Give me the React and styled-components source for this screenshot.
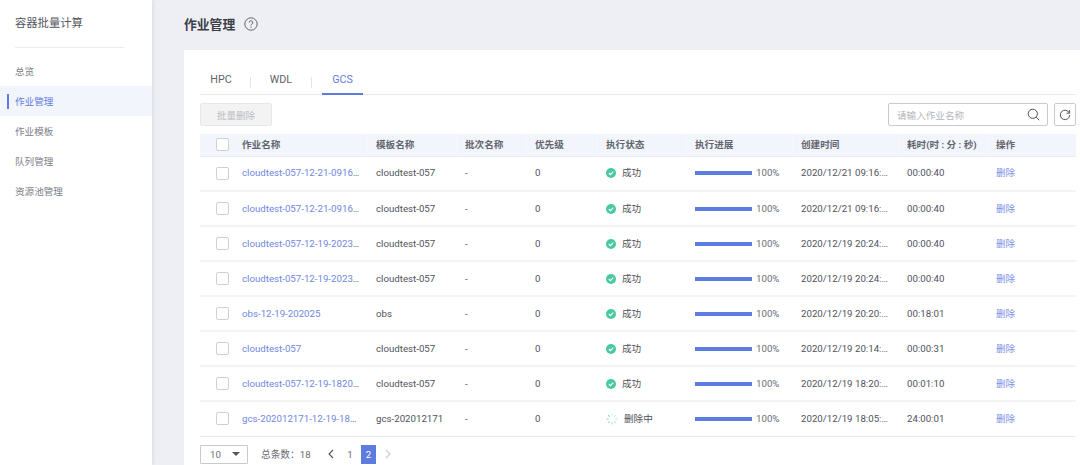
import { createGlobalStyle } from "styled-components";
import styled from "styled-components";

const GlobalStyle = createGlobalStyle`
  html, body {
    margin: 0;
    height: 100%;
    overflow: hidden;
    background: #eeeff5;
  }
  body {
    font-family: Roboto, "Noto Sans CJK SC", sans-serif;
    font-size: 9.7px;
    color: #4a4d57;
  }
  #root {
    height: 100%;
  }
`;

const Page = styled.div`
  display: flex;
  width: 1080px;
  height: 465px;
  overflow: hidden;
`;

const Sidebar = styled.aside`
  flex: 0 0 152px;
  background: #fff;
  box-shadow: 1px 0 4px rgba(60, 70, 110, 0.12);
`;

const SideTitle = styled.div`
  margin: 0 28px 0 15px;
  padding: 17px 0 16px;
  height: 14px;
  line-height: 14px;
  font-size: 11.3px;
  color: #555861;
  border-bottom: 1px solid #ececf0;
`;

const SideNav = styled.nav`
  margin-top: 8px;
`;

const SideItem = styled.div`
  position: relative;
  height: 30px;
  line-height: 32px;
  padding-left: 15px;
  font-size: 9.6px;
  color: ${p => (p.$active ? "#5e7ce0" : "#7b7e87")};
  background: ${p => (p.$active ? "#f2f5fc" : "transparent")};

  &::before {
    content: "";
    display: ${p => (p.$active ? "block" : "none")};
    position: absolute;
    left: 7px;
    top: 8px;
    width: 2px;
    height: 15px;
    background: #5e7ce0;
  }
`;

const Main = styled.main`
  flex: 1;
  padding-left: 32px;
  min-width: 0;
`;

const PageHeader = styled.header`
  display: flex;
  align-items: center;
  gap: 9px;
  box-sizing: border-box;
  height: 50px;
  padding-bottom: 2px;
`;

const PageTitle = styled.h1`
  margin: 0 0 2px;
  font-size: 12.8px;
  font-weight: 700;
  color: #3c3f48;
`;

const HelpIcon = styled.svg`
  width: 14px;
  height: 14px;
`;

const Card = styled.section`
  background: #fff;
  height: 415px;
  padding: 16px 4px 0 16px;
  box-sizing: border-box;
`;

const Tabs = styled.div`
  display: flex;
  align-items: flex-end;
  height: 28px;
  border-bottom: 1px solid #e8e9ee;
`;

const Tab = styled.div`
  position: relative;
  box-sizing: border-box;
  width: ${p => p.$w}px;
  height: 28px;
  line-height: 25px;
  margin-bottom: -1px;
  text-align: center;
  font-size: 10.7px;
  color: ${p => (p.$active ? "#5e7ce0" : "#5f626b")};
  border-bottom: 2px solid ${p => (p.$active ? "#5e7ce0" : "transparent")};
`;

const TabGap = styled.span`
  flex: 0 0 1px;
  height: 11px;
  margin: 0 ${p => p.$r}px 6px ${p => p.$l}px;
  background: #e3e4e8;
`;

const Toolbar = styled.div`
  display: flex;
  align-items: center;
  justify-content: space-between;
  height: 39px;
  padding-right: 0;
`;

const BatchButton = styled.button`
  width: 72px;
  height: 23px;
  padding: 0;
  font: inherit;
  font-size: 9.6px;
  color: #bcbdc2;
  background: #f3f3f4;
  border: 1px solid #e8e8ea;
  border-radius: 2px;
`;

const ToolRight = styled.div`
  display: flex;
  gap: 6px;
`;

const Search = styled.div`
  display: flex;
  align-items: center;
  justify-content: space-between;
  box-sizing: border-box;
  width: 160px;
  height: 23px;
  padding: 0 7px 0 8px;
  border: 1px solid #c9cad0;
  border-radius: 2px;
  font-size: 9.6px;
  color: #b4b6bd;
`;

const RefreshButton = styled.div`
  display: flex;
  align-items: center;
  justify-content: center;
  box-sizing: border-box;
  width: 22px;
  height: 23px;
  border: 1px solid #c9cad0;
  border-radius: 2px;
`;

const Table = styled.table`
  width: 876px;
  table-layout: fixed;
  border-collapse: collapse;
`;

const Th = styled.th`
  position: relative;
  height: 22px;
  padding: 0 9px;
  text-align: left;
  font-size: 9.6px;
  font-weight: 700;
  line-height: 12px;
  color: #62656e;
  background: #f2f5fc;
  border-bottom: 1px solid #e8ebf3;
  box-sizing: border-box;

  &:not(:first-child):not(:nth-child(2))::before {
    content: "";
    position: absolute;
    left: 0;
    top: 0;
    bottom: 0;
    width: 1px;
    background: #f7f8fd;
  }
`;

const Row = styled.tr`
  & > td {
    border-bottom: ${p => (p.$last ? "1px solid #e8e8ec" : "2px solid #f4f4f6")};
  }
`;

const Td = styled.td`
  height: 35px;
  padding: 0 9px;
  box-sizing: border-box;
  line-height: 12px;
  color: #4f525b;
  white-space: nowrap;
  overflow: hidden;
  text-overflow: ellipsis;
`;

const CheckCell = styled(Td)`
  padding: 0 0 0 16px;
`;

const CheckHead = styled(Th)`
  padding: 0 0 0 16px;
`;

const NameCell = styled(Td)`
  padding-right: 6px;
`;

const Checkbox = styled.span`
  display: block;
  box-sizing: border-box;
  width: 13px;
  height: 13px;
  background: #fff;
  border: 1px solid #cfd0d5;
  border-radius: 2px;
`;

const NameLink = styled.a`
  color: #6f87e2;
`;

const Status = styled.div`
  display: flex;
  align-items: center;
  gap: ${p => p.$gap}px;
  height: 12px;
  font-size: 9.6px;
`;

const Progress = styled.div`
  display: flex;
  align-items: center;
  gap: 4px;
  color: #6a6d76;
`;

const Track = styled.div`
  width: 57px;
  height: 4px;
  background: #5e7ce0;
`;

const DeleteLink = styled.a`
  font-size: 9.6px;
  color: #7d93e6;
`;

const Pager = styled.footer`
  display: flex;
  align-items: center;
  height: 19px;
  margin-top: 8px;
  color: #6a6d76;
`;

const PageSize = styled.div`
  display: flex;
  align-items: center;
  justify-content: space-between;
  box-sizing: border-box;
  width: 48px;
  height: 19px;
  padding: 0 7px 0 9px;
  border: 1px solid #c9cad0;
  border-radius: 1px;
`;

const Caret = styled.span`
  width: 0;
  height: 0;
  border-left: 4px solid transparent;
  border-right: 4px solid transparent;
  border-top: 4px solid #555861;
`;

const Total = styled.span`
  width: 50px;
  margin: 0 12px 0 13px;
  white-space: nowrap;
`;

const PageButton = styled.span`
  display: flex;
  align-items: center;
  justify-content: center;
  width: ${p => p.$w || 16}px;
  height: 19px;
  margin-right: ${p => p.$mr || 0}px;
  color: ${p => (p.$active ? "#fff" : "#6a6d76")};
  background: ${p => (p.$active ? "#5e7ce0" : "transparent")};
`;

const Chevron = styled.svg`
  width: 8px;
  height: 10px;
`;

const columns = [33, 134, 89, 70, 71, 89, 106, 106, 89, 89];
const headers = ["作业名称", "模板名称", "批次名称", "优先级", "执行状态", "执行进展", "创建时间", "耗时(时 : 分 : 秒)", "操作"];

const jobs = [
  { name: "cloudtest-057-12-21-091625", template: "cloudtest-057", created: "2020/12/21 09:16:32", cost: "00:00:40" },
  { name: "cloudtest-057-12-21-091612", template: "cloudtest-057", created: "2020/12/21 09:16:20", cost: "00:00:40" },
  { name: "cloudtest-057-12-19-202341", template: "cloudtest-057", created: "2020/12/19 20:24:02", cost: "00:00:40" },
  { name: "cloudtest-057-12-19-202328", template: "cloudtest-057", created: "2020/12/19 20:24:01", cost: "00:00:40" },
  { name: "obs-12-19-202025", template: "obs", created: "2020/12/19 20:20:25", cost: "00:18:01" },
  { name: "cloudtest-057", template: "cloudtest-057", created: "2020/12/19 20:14:10", cost: "00:00:31" },
  { name: "cloudtest-057-12-19-182015", template: "cloudtest-057", created: "2020/12/19 18:20:15", cost: "00:01:10" },
  { name: "gcs-202012171-12-19-180532", template: "gcs-202012171", created: "2020/12/19 18:05:32", cost: "24:00:01", deleting: true },
];

function SuccessIcon() {
  return (
    <svg width="10" height="10" viewBox="0 0 10 10">
      <circle cx="5" cy="5" r="5" fill="#48c9a0" />
      <path d="M2.8 5l1.6 1.6 2.9-2.9" fill="none" stroke="#fff" strokeWidth="1.1" />
    </svg>
  );
}

function SpinnerIcon() {
  const ticks = [0, 45, 90, 135, 180, 225, 270, 315];
  return (
    <svg width="12" height="12" viewBox="0 0 12 12">
      {ticks.map((deg, i) => (
        <line
          key={deg}
          x1="6"
          y1="0.6"
          x2="6"
          y2="2.8"
          stroke="#48c9a0"
          strokeOpacity={0.25 + i * 0.08}
          strokeWidth="1"
          transform={`rotate(${deg} 6 6)`}
        />
      ))}
    </svg>
  );
}

export default function App() {
  return (
    <Page>
      <GlobalStyle />
      <Sidebar>
        <SideTitle>容器批量计算</SideTitle>
        <SideNav>
          <SideItem>总览</SideItem>
          <SideItem $active>作业管理</SideItem>
          <SideItem>作业模板</SideItem>
          <SideItem>队列管理</SideItem>
          <SideItem>资源池管理</SideItem>
        </SideNav>
      </Sidebar>
      <Main>
        <PageHeader>
          <PageTitle>作业管理</PageTitle>
          <HelpIcon viewBox="0 0 14 14">
            <circle cx="7" cy="7" r="6.2" fill="none" stroke="#60636c" strokeWidth="1" />
            <path d="M5.2 5.6a1.8 1.8 0 1 1 2.7 1.5c-.6.4-.9.7-.9 1.4" fill="none" stroke="#60636c" strokeWidth="1" />
            <circle cx="7" cy="10.2" r=".6" fill="#60636c" />
          </HelpIcon>
        </PageHeader>
        <Card>
          <Tabs>
            <Tab $w={42}>HPC</Tab>
            <TabGap $l={8} $r={0} />
            <Tab $w={60}>WDL</Tab>
            <TabGap $l={0} $r={10} />
            <Tab $w={41} $active>GCS</Tab>
          </Tabs>
          <Toolbar>
            <BatchButton disabled>批量删除</BatchButton>
            <ToolRight>
              <Search>
                请输入作业名称
                <svg width="13" height="13" viewBox="0 0 13 13">
                  <circle cx="5.8" cy="5.8" r="4.6" fill="none" stroke="#4f525b" strokeWidth="1" />
                  <path d="M9.2 9.2l3 3" stroke="#4f525b" strokeWidth="1" />
                </svg>
              </Search>
              <RefreshButton>
                <svg width="12" height="12" viewBox="0 0 12 12">
                  <path d="M10.2 3.8A4.7 4.7 0 1 0 10.7 6" fill="none" stroke="#4f525b" strokeWidth="1" />
                  <path d="M10.6 1.2v3h-3" fill="none" stroke="#4f525b" strokeWidth="1" />
                </svg>
              </RefreshButton>
            </ToolRight>
          </Toolbar>
          <Table>
            <colgroup>
              {columns.map((w, i) => (
                <col key={i} width={w} />
              ))}
            </colgroup>
            <thead>
              <tr>
                <CheckHead><Checkbox /></CheckHead>
                {headers.map(h => (
                  <Th key={h}>{h}</Th>
                ))}
              </tr>
            </thead>
            <tbody>
              {jobs.map((job, i) => (
                <Row key={job.name} $last={i === jobs.length - 1}>
                  <CheckCell><Checkbox /></CheckCell>
                  <NameCell><NameLink>{job.name}</NameLink></NameCell>
                  <Td>{job.template}</Td>
                  <Td>-</Td>
                  <Td>0</Td>
                  <Td>
                    {job.deleting ? (
                      <Status $gap={6}><SpinnerIcon />删除中</Status>
                    ) : (
                      <Status $gap={6}><SuccessIcon />成功</Status>
                    )}
                  </Td>
                  <Td>
                    <Progress><Track />100%</Progress>
                  </Td>
                  <Td>{job.created}</Td>
                  <Td>{job.cost}</Td>
                  <Td><DeleteLink>删除</DeleteLink></Td>
                </Row>
              ))}
            </tbody>
          </Table>
          <Pager>
            <PageSize>10<Caret /></PageSize>
            <Total>总条数：18</Total>
            <PageButton $mr={3}>
              <Chevron viewBox="0 0 8 10">
                <path d="M6 1L2 5l4 4" fill="none" stroke="#4f525b" strokeWidth="1.1" />
              </Chevron>
            </PageButton>
            <PageButton $mr={3}>1</PageButton>
            <PageButton $active $w={15} $mr={4}>2</PageButton>
            <PageButton>
              <Chevron viewBox="0 0 8 10">
                <path d="M2 1l4 4-4 4" fill="none" stroke="#c9cad0" strokeWidth="1.1" />
              </Chevron>
            </PageButton>
          </Pager>
        </Card>
      </Main>
    </Page>
  );
}
